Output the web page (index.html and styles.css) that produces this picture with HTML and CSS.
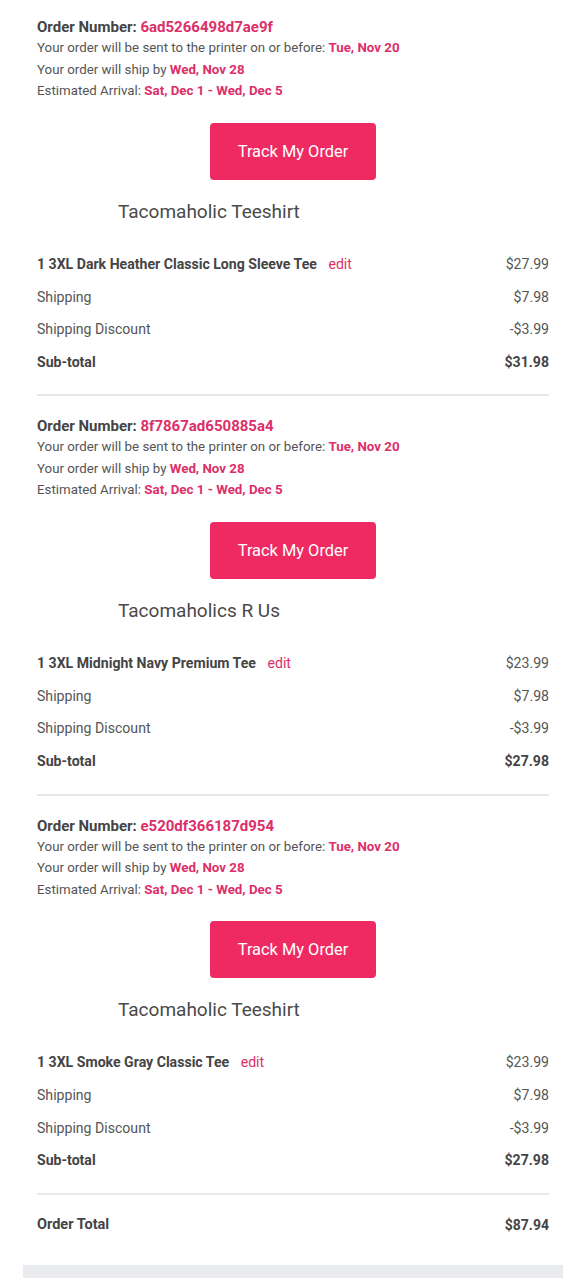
FILE: index.html
```html
<!DOCTYPE html>
<html>
<head>
<meta charset="utf-8">
<link rel="stylesheet" href="styles.css">
</head>
<body>
<div class="page">
  <section class="order">
    <div class="info">
      <div class="num">Order Number: <span class="hl">6ad5266498d7ae9f</span></div>
      <div class="line">Your order will be sent to the printer on or before: <b class="hl">Tue, Nov 20</b></div>
      <div class="line">Your order will ship by <b class="hl">Wed, Nov 28</b></div>
      <div class="line">Estimated Arrival: <b class="hl">Sat, Dec 1 - Wed, Dec 5</b></div>
    </div>
    <div class="btn-wrap"><a class="btn">Track My Order</a></div>
    <h2 class="title">Tacomaholic Teeshirt</h2>
    <div class="rows">
      <div class="row"><span class="bold">1 3XL Dark Heather Classic Long Sleeve Tee <span class="edit">edit</span></span><span>$27.99</span></div>
      <div class="row"><span>Shipping</span><span>$7.98</span></div>
      <div class="row"><span>Shipping Discount</span><span>-$3.99</span></div>
      <div class="row bold"><span>Sub-total</span><span>$31.98</span></div>
    </div>
    <hr class="divider">
  </section>
  <section class="order">
    <div class="info">
      <div class="num">Order Number: <span class="hl">8f7867ad650885a4</span></div>
      <div class="line">Your order will be sent to the printer on or before: <b class="hl">Tue, Nov 20</b></div>
      <div class="line">Your order will ship by <b class="hl">Wed, Nov 28</b></div>
      <div class="line">Estimated Arrival: <b class="hl">Sat, Dec 1 - Wed, Dec 5</b></div>
    </div>
    <div class="btn-wrap"><a class="btn">Track My Order</a></div>
    <h2 class="title">Tacomaholics R Us</h2>
    <div class="rows">
      <div class="row"><span class="bold">1 3XL Midnight Navy Premium Tee <span class="edit">edit</span></span><span>$23.99</span></div>
      <div class="row"><span>Shipping</span><span>$7.98</span></div>
      <div class="row"><span>Shipping Discount</span><span>-$3.99</span></div>
      <div class="row bold"><span>Sub-total</span><span>$27.98</span></div>
    </div>
    <hr class="divider">
  </section>
  <section class="order">
    <div class="info">
      <div class="num">Order Number: <span class="hl">e520df366187d954</span></div>
      <div class="line">Your order will be sent to the printer on or before: <b class="hl">Tue, Nov 20</b></div>
      <div class="line">Your order will ship by <b class="hl">Wed, Nov 28</b></div>
      <div class="line">Estimated Arrival: <b class="hl">Sat, Dec 1 - Wed, Dec 5</b></div>
    </div>
    <div class="btn-wrap"><a class="btn">Track My Order</a></div>
    <h2 class="title">Tacomaholic Teeshirt</h2>
    <div class="rows">
      <div class="row"><span class="bold">1 3XL Smoke Gray Classic Tee <span class="edit">edit</span></span><span>$23.99</span></div>
      <div class="row"><span>Shipping</span><span>$7.98</span></div>
      <div class="row"><span>Shipping Discount</span><span>-$3.99</span></div>
      <div class="row bold"><span>Sub-total</span><span>$27.98</span></div>
    </div>
    <hr class="divider">
  </section>
  <div class="total"><span>Order Total</span><span>$87.94</span></div>
  <div class="footer"></div>
</div>
</body>
</html>
```

FILE: styles.css
```css
* { box-sizing: border-box; }
html, body { margin: 0; padding: 0; background: #fff; }
body {
  font-family: Roboto, "Liberation Sans", Arial, sans-serif;
  color: #555;
  font-size: 14px;
}
.page { padding-top: 17px; }
.order { padding: 0 36px 0 37px; }
.num {
  font-size: 15px;
  line-height: 20px;
  font-weight: 700;
  color: #444;
}
.line {
  font-size: 13.3px;
  line-height: 21.5px;
  color: #555;
}
.hl { color: #dc2f69; font-weight: 700; }
.btn-wrap {
  display: flex;
  justify-content: center;
  padding-top: 21px;
}
.btn {
  display: flex;
  align-items: center;
  justify-content: center;
  width: 166px;
  height: 57px;
  background: #ef2a63;
  color: #fff;
  border-radius: 4px;
  font-size: 16.4px;
}
.title {
  margin: 20px 0 0 81px;
  font-size: 19px;
  line-height: 24px;
  font-weight: 400;
  color: #4a4a4a;
}
.rows { margin-top: 24px; }
.row {
  display: flex;
  justify-content: space-between;
  align-items: center;
  height: 32.7px;
  font-size: 14.1px;
  color: #555;
}
.bold { font-weight: 700; color: #444; }
.edit { color: #dc2f69; font-weight: 400; margin-left: 8px; }
.divider {
  border: 0;
  height: 2px;
  background: #e8e8ea;
  margin: 16px 0 20px;
}
.total {
  display: flex;
  justify-content: space-between;
  align-items: center;
  height: 20px;
  padding: 0 36px 0 37px;
  font-weight: 700;
  color: #444;
  font-size: 14px;
}
.total span:first-child { font-size: 14.5px; }
.footer {
  margin: 30px 22px 0 23px;
  height: 40px;
  background: #e9ebef;
}
```
